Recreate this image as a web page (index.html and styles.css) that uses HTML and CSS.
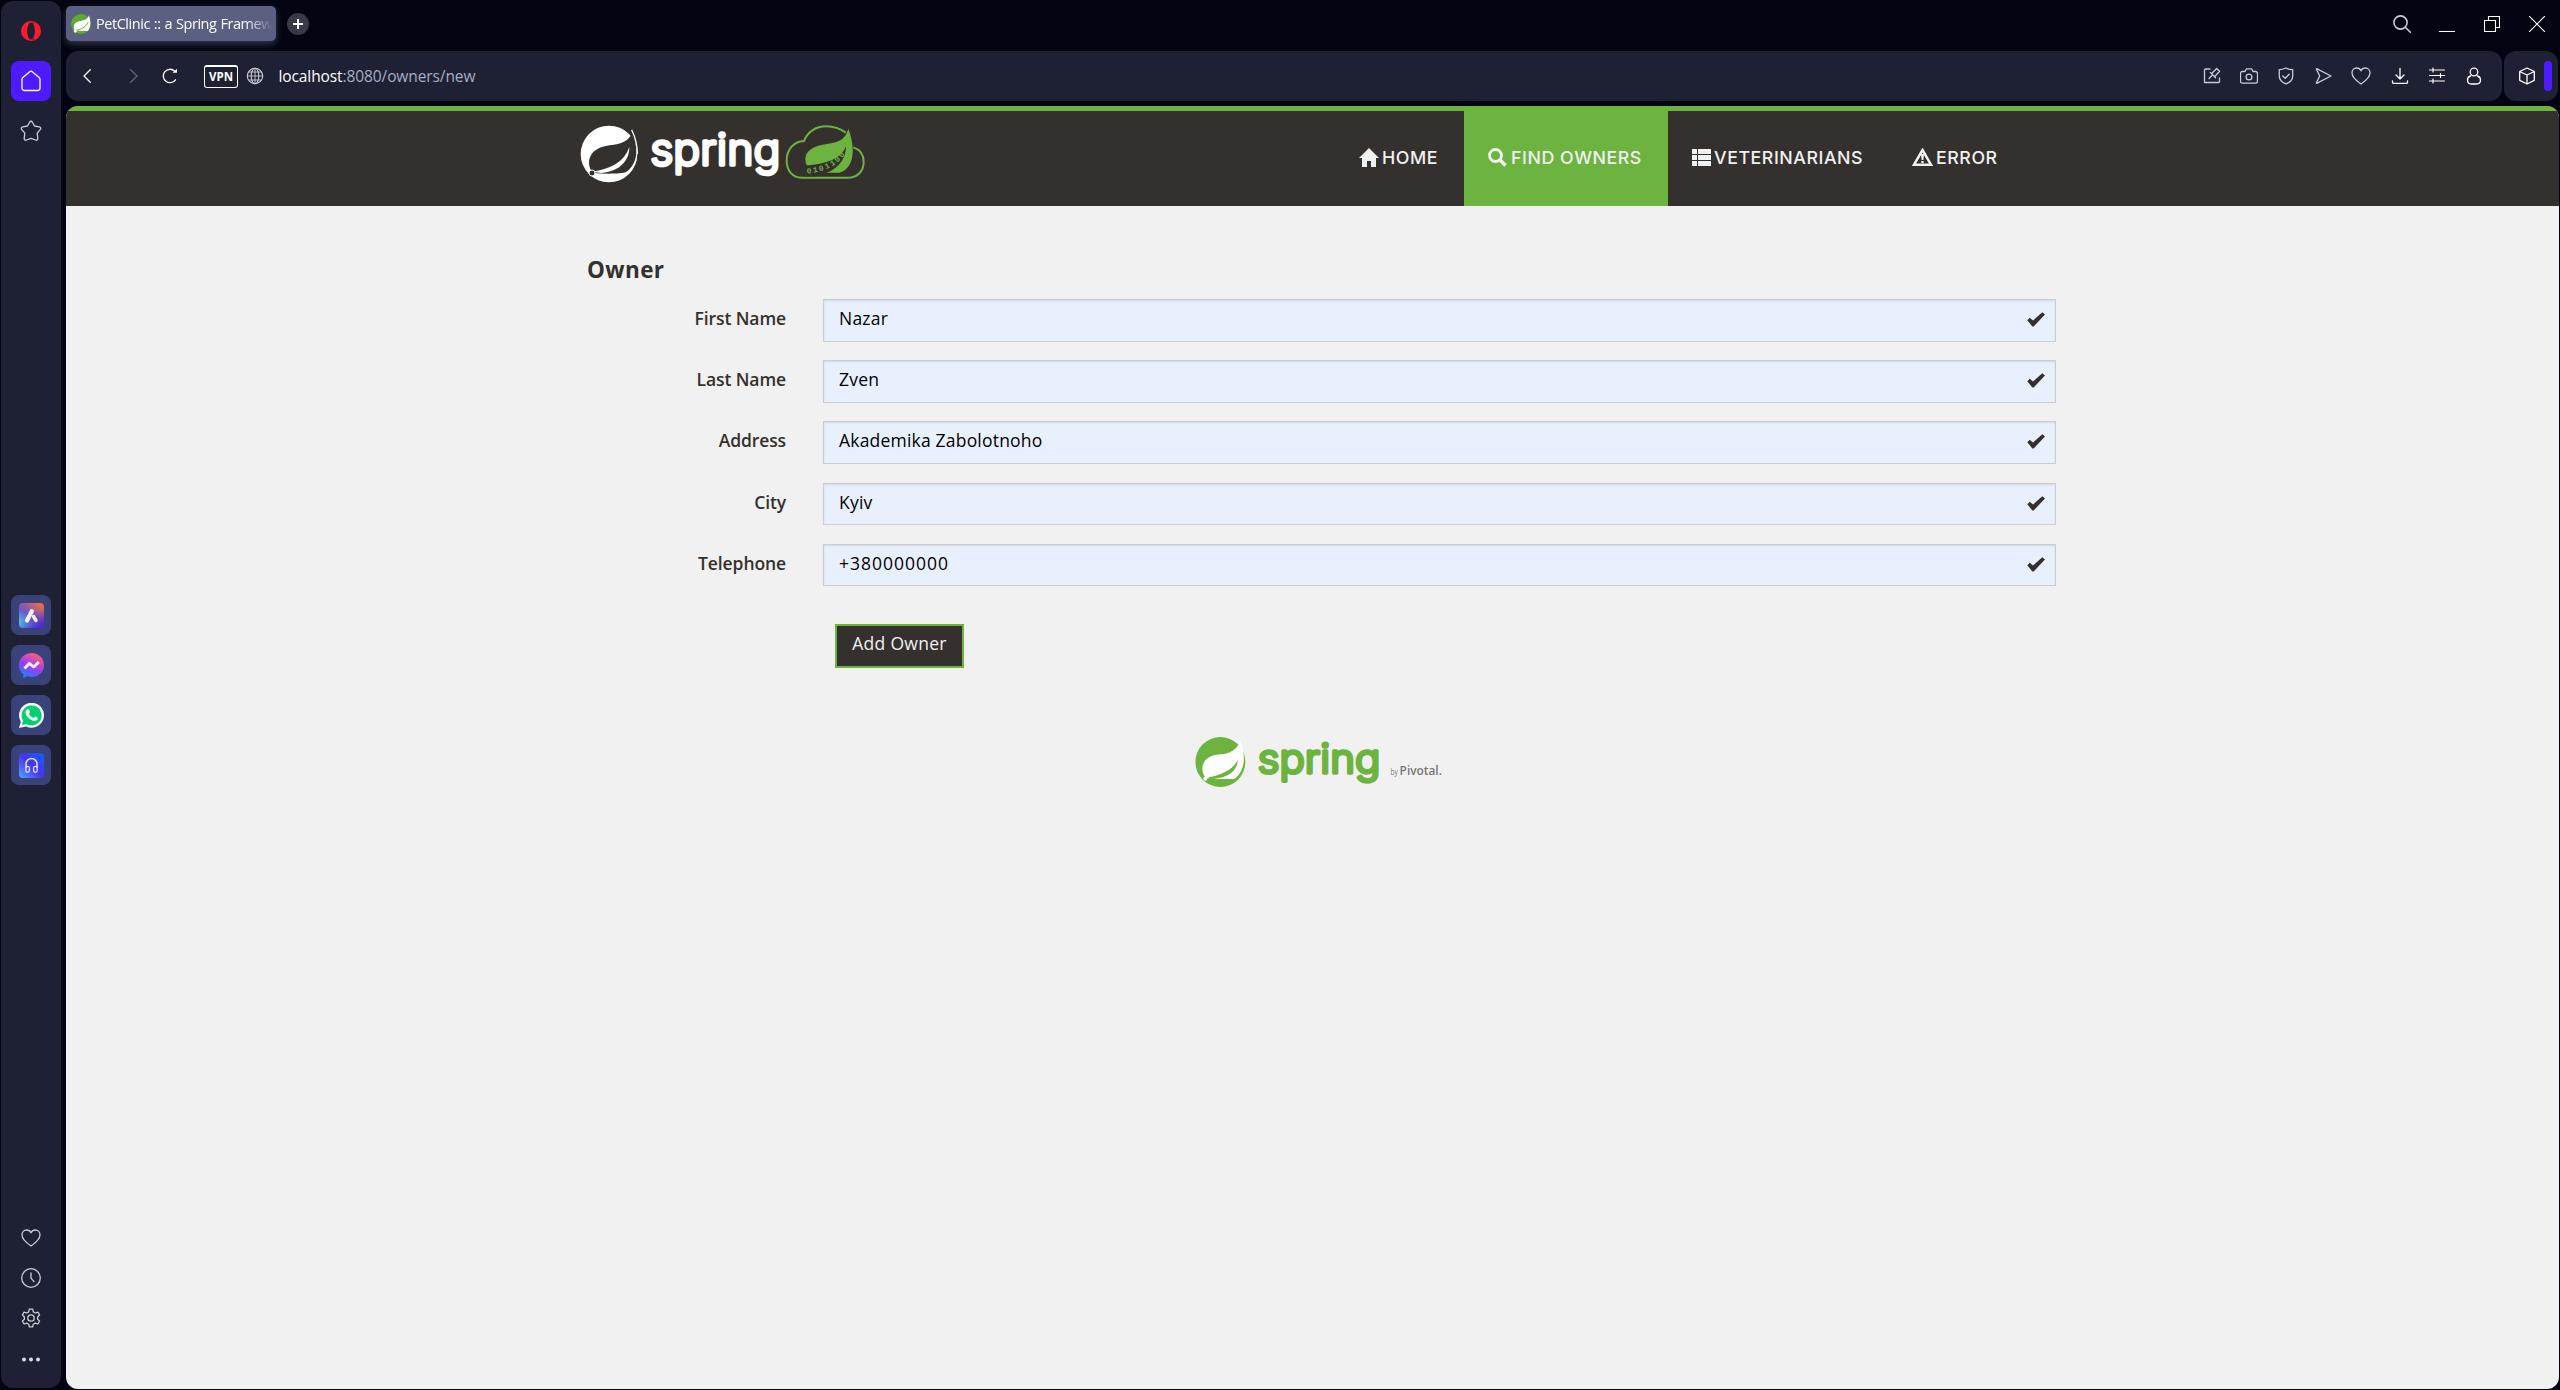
FILE: index.html
```html
<!DOCTYPE html>
<html lang="en">
<head>
<meta charset="utf-8">
<title>PetClinic :: a Spring Framework demonstration</title>
<link rel="stylesheet" href="styles.css">
</head>
<body>
<svg class="defs" width="0" height="0">
  <defs>
    <symbol id="check" viewBox="0 0 54 44"><path d="M1 24 8 17 18 25 46 0 54 7 20 43 16 43Z"/></symbol>
    <symbol id="heart" viewBox="0 0 20 18"><path d="M10 17C7 15 1 10.500 1 5.800 1 3 3 1 5.600 1 7.500 1 9.200 2 10 3.800 10.800 2 12.500 1 14.400 1 17 1 19 3 19 5.800 19 10.500 13 15 10 17Z"/></symbol>
  </defs>
</svg>
<aside class="sidebar">
  <div class="side-group side-top">
    <svg class="opera" width="20" height="20" viewBox="0 0 20 20"><path fill="#ff1b2d" fill-rule="evenodd" d="M10 0a10 10 0 1 0 0 20 10 10 0 0 0 0-20Zm0 1.600c2.400 0 3.800 3.700 3.800 8.400s-1.400 8.400-3.800 8.400S6.200 14.700 6.200 10 7.600 1.600 10 1.600Z"/><path fill="#c80d1e" d="M10 1.600C12 .3 14.500.800 16 2.100c-1.500-.5-3 0-3.600 1.300C11.800 2.200 11 1.600 10 1.600ZM10 18.400c2 1.300 4.500.8 6-.5-1.500.5-3 0-3.600-1.300-.6 1.200-1.400 1.800-2.400 1.800Z"/></svg>
    <div class="tile home"><svg class="line bright" width="20" height="22" viewBox="0 0 20 22"><path d="M1 9.500C1 8.800 1.300 8 1.900 7.500L8.700 1.700a2 2 0 0 1 2.600 0L18.100 7.500C18.700 8 19 8.800 19 9.500V18a2.500 2.500 0 0 1-2.500 2.500h-13A2.500 2.500 0 0 1 1 18Z"/></svg></div>
    <svg class="line star" width="22" height="22" viewBox="0 0 22 22"><path d="M9.600 2.200c.6-1.300 2.200-1.300 2.800 0L14.500 6l4.700.9c1.600.3 2 1.600 1 2.700l-3 3.500.6 5.300c.2 1.500-1 2.200-2.200 1.600L11 18.300 6.400 20c-1.200.6-2.400-.1-2.200-1.600l.6-5.300-3-3.500C.8 8.500 1.200 7.200 2.800 6.900L7.500 6Z"/></svg>
  </div>
  <div class="side-group side-apps">
    <div class="tile app"><svg width="25" height="25" viewBox="0 0 25 25"><defs><linearGradient id="ga" x1=".1" y1=".9" x2=".8" y2="0"><stop offset="0" stop-color="#4ccce0"/><stop offset=".45" stop-color="#6b55c8"/><stop offset="1" stop-color="#ee6b45"/></linearGradient><linearGradient id="gb" x1=".3" y1=".1" x2=".8" y2="1"><stop offset=".4" stop-color="#5b34d0" stop-opacity="0"/><stop offset="1" stop-color="#4c25d8"/></linearGradient></defs><rect width="25" height="25" rx="4" fill="url(#ga)"/><rect width="25" height="25" rx="4" fill="url(#gb)"/><path d="M8 17.500 12.800 8.200" stroke="#f2f2f2" stroke-width="4.200" stroke-linecap="round"/><path d="m14.500 13.500 2.500 4" stroke="#f2f2f2" stroke-width="3.500" stroke-linecap="round"/></svg></div>
    <div class="tile app"><svg width="25" height="25" viewBox="0 0 25 25"><defs><linearGradient id="gm" x1=".2" y1="1" x2=".7" y2="0"><stop offset="0" stop-color="#0a8cff"/><stop offset=".45" stop-color="#9a3cff"/><stop offset="1" stop-color="#ff5f70"/></linearGradient></defs><path fill="url(#gm)" d="M12.500 0C5.500 0 0 5 0 12c0 4 1.700 7 4.300 9.200V25l4-1.800C17 26 25 20.500 25 12.300 25 5 19.500 0 12.500 0Z"/><path d="m5.500 15.500 4.700-5 4.600 3.400 5-5" fill="none" stroke="#f4f4f4" stroke-width="2.800" stroke-linejoin="round"/></svg></div>
    <div class="tile app"><svg width="25" height="25" viewBox="0 0 25 25"><path fill="#f5f5f5" d="M0 25 1.800 18.700A12.500 12.500 0 1 1 7 23.500Z"/><path fill="#04d072" d="m3 22 1-4.500A10 10 0 1 1 7.500 21Z"/><path fill="#f5f5f5" d="M8.300 6.200c.7-.3 1.500-.2 1.800.6l.8 2c.2.500-.7 1.400-.8 1.900.8 2 2.500 3.400 4.400 4.200.6-.2 1.200-1.500 1.800-1.500l2.200 1.200c.6.400.2 1.700-.4 2.300-1.200 1.200-3 1.300-4.800.6C9.500 16 7.300 13 6.600 10.600 6.200 8.900 7 6.800 8.300 6.200Z"/></svg></div>
    <div class="tile app"><svg width="25" height="25" viewBox="0 0 25 25"><defs><linearGradient id="gh" x1="0" y1="1" x2="1" y2="0"><stop offset="0" stop-color="#4fa8ff"/><stop offset=".5" stop-color="#4a32f0"/><stop offset="1" stop-color="#0d63ff"/></linearGradient></defs><rect width="25" height="25" rx="4" fill="url(#gh)"/><path d="M7 15v-4a5.500 5.500 0 0 1 11 0v4" fill="none" stroke="#dfe2ff" stroke-width="1.500"/><rect x="6.800" y="13.300" width="3.600" height="6" rx="1.800" fill="none" stroke="#dfe2ff" stroke-width="1.300"/><rect x="14.600" y="13.300" width="3.600" height="6" rx="1.800" fill="none" stroke="#dfe2ff" stroke-width="1.300"/></svg></div>
  </div>
  <div class="side-group side-bottom">
    <svg class="line" width="20" height="18"><use href="#heart"/></svg>
    <svg class="line" width="20" height="20" viewBox="0 0 20 20"><circle cx="10" cy="10" r="9.300"/><path d="M10 5v5.200l3 3.500"/></svg>
    <svg class="line" width="20" height="20" viewBox="0 0 20 20"><circle cx="10" cy="10" r="3.200"/><path d="M8.300 1.200h3.400l.6 2.700 2 1.100 2.600-.9 1.700 3-2 1.800v2.300l2 1.800-1.700 3-2.600-.9-2 1.100-.6 2.700H8.300l-.6-2.700-2-1.100-2.600.9-1.700-3 2-1.800V8.900l-2-1.800 1.700-3 2.600.9 2-1.100Z"/></svg>
    <svg width="20" height="20" viewBox="0 0 20 20" fill="#d9dbe2"><circle cx="3" cy="10.500" r="2"/><circle cx="10" cy="10.500" r="2"/><circle cx="17" cy="10.500" r="2"/></svg>
  </div>
</aside>
<div class="browser">
  <header class="tabs">
    <div class="tab">
      <svg width="20" height="20" viewBox="0 0 150 150"><circle cx="75" cy="75" r="75" fill="#5fa832"/><path fill="#fff" d="M135 10C124 38 105 48 72 52 38 57 22 72 22 98c0 12 4 20 9 26 45 5 80 3 96 3C147 98 151 60 135 10Z"/><path d="M32 124C80 115 115 95 129 60" stroke="#5fa832" stroke-width="7" fill="none"/><circle cx="32" cy="128" r="12" fill="#fff"/></svg>
      <span class="tab-title">PetClinic :: a Spring Framew</span>
    </div>
    <div class="new-tab"><svg width="10" height="10" viewBox="0 0 10 10"><path d="M5 0v10M0 5h10" stroke="#fff" stroke-width="2"/></svg></div>
    <div class="window-tools">
      <svg class="line" width="18" height="18" viewBox="0 0 18 18"><circle cx="7.500" cy="7.500" r="6.600"/><path d="m12.300 12.300 5 5"/></svg>
      <svg class="win" width="16" height="16" viewBox="0 0 16 16"><path d="M0 15.500h16"/></svg>
      <svg class="win" width="16" height="16" viewBox="0 0 16 16"><path d="M.5 4.500h11v11H.5ZM4.500 4.500v-4h11v11h-4"/></svg>
      <svg class="win" width="16" height="16" viewBox="0 0 16 16"><path d="m0 0 16 16M16 0 0 16"/></svg>
    </div>
  </header>
  <div class="toolbar-row">
    <div class="toolbar">
      <svg class="line bright back" width="8" height="14" viewBox="0 0 8 14"><path d="M7.300.8 1 7l6.300 6.200"/></svg>
      <svg class="line dim forward" width="8" height="14" viewBox="0 0 8 14"><path d="M.7.800 7 7 .7 13.200"/></svg>
      <svg class="line bright reload" width="16" height="16" viewBox="0 0 16 16"><path d="M13.500 11.800A6.700 6.700 0 1 1 12.500 3"/><path d="M10.500 4.700H15V.8Z" fill="#fff" stroke="none"/></svg>
      <span class="vpn">VPN</span>
      <svg class="line globe" width="18" height="18" viewBox="0 0 18 18"><circle cx="9" cy="9" r="7.700"/><ellipse cx="9" cy="9" rx="3.800" ry="7.700"/><path d="M9 1.300v15.400M1.300 9h15.400M2.500 5h13M2.500 13h13" stroke-width=".9"/></svg>
      <span class="url"><b>localhost</b>:8080/owners/new</span>
      <div class="tools">
        <svg class="line" width="18" height="18" viewBox="0 0 18 18"><path d="M7 2H2.500C1.900 2 1.500 2.400 1.500 3v12.500h14c.6 0 1-.4 1-1V11M6 11.500l3-3M9 6.200 13.600 1.500l3 2.800-4.600 5M7.300 5.400l5.300 5.300"/></svg>
        <svg class="line" width="18" height="18" viewBox="0 0 18 18"><path d="M5 4.500 6.500 1.800h5L13 4.500h2.500c1.200 0 2 .9 2 2v7.700c0 1.200-.8 2-2 2h-13c-1.200 0-2-.8-2-2V6.500c0-1.100.8-2 2-2Z"/><circle cx="9" cy="10" r="2.900"/></svg>
        <svg class="line" width="18" height="18" viewBox="0 0 18 18"><path d="M9 1c2 1 4 1.700 6.700 1.700V9c0 4-3.200 6.500-6.700 7.900C5.500 15.500 2.300 13 2.300 9V2.700C5 2.700 7 2 9 1ZM5.800 9 8.200 11.300l4-4"/></svg>
        <svg class="line" width="18" height="18" viewBox="0 0 18 18"><path d="M2.700 1.700 17 9 2.700 16.300 2.300 16 5.700 9 2.300 2Z"/></svg>
        <svg class="line" width="20" height="18"><use href="#heart"/></svg>
        <svg class="line bright" width="18" height="18" viewBox="0 0 18 18"><path d="M9 1.500v10M5 8l4 4 4-4M1.500 14v1.300c0 .6.400 1 1 1h13c.6 0 1-.4 1-1V14"/></svg>
        <svg class="line bright" width="18" height="18" viewBox="0 0 18 18"><path d="M1.500 3h15M1.500 8.500h15M1.500 14h15M5 1v4M12.500 6.500v4M5 12v4" stroke-width="1.200"/></svg>
        <svg class="line bright" width="18" height="18" viewBox="0 0 18 18"><circle cx="9" cy="5" r="3.800"/><path d="M5.600 9C3.500 9.500 2.500 11 2.500 13c0 2.500 1.500 4 4 4h5c2.500 0 4-1.500 4-4 0-2-1-3.500-3.100-4"/></svg>
      </div>
    </div>
    <div class="cube-box">
      <svg class="line bright" width="18" height="18" viewBox="0 0 18 18"><path d="m9 1 7.300 3.500v8.800L9 17l-7.300-3.700V4.500ZM1.700 4.500 9 8l7.300-3.500M9 8v9"/></svg>
      <i class="accent"></i>
    </div>
  </div>
  <main class="page">
    <nav class="navbar">
      <svg class="brand" viewBox="55 70 870 186" width="290" height="62">
        <circle cx="148" cy="163" r="85" fill="#fff"/>
        <path fill="#34302d" d="M216 102C206 124 186 133 150 137 106 142 88 165 88 190c0 12 5 24 14 30 40 4 85 2 96-2C226 200 232 168 230 145 226 120 222 112 216 102Z"/>
        <path d="M216 90C228 115 233 138 233 163" stroke="#fff" stroke-width="4" fill="none"/>
        <path fill="#fff" d="M96 216C155 208 195 185 209 142 210 180 183 215 125 220Z"/>
        <circle cx="97" cy="220" r="9" fill="#34302d" stroke="#fff" stroke-width="3"/>
        <text x="272" y="196" textLength="390" lengthAdjust="spacingAndGlyphs" class="word" fill="#fff" stroke="#fff">spring</text>
        <path d="M858 99C842 87 825 80 800 80c-32 0-57 17-67 44-33 2-52 27-52 58 0 33 18 52 46 52h138c29 0 47-20 47-47 0-22-12-38-31-44" fill="none" stroke="#6db33f" stroke-width="6"/>
        <path fill="#6db33f" d="M866 87C857 116 844 127 805 132c-45 6-68 22-68 46 0 10 3 18 8 24l35 17H840C878 207 892 158 866 87Z"/>
        <path d="M859 140C846 174 806 194 736 198V230H772C826 216 858 188 859 140Z" fill="#34302d"/>
        <path id="bits" d="M742 222C794 217 838 198 862 154" fill="none"/>
        <text class="bits"><textPath href="#bits" textLength="132">0101100</textPath></text>
      </svg>
      <ul class="menu">
        <li><svg width="20" height="19" viewBox="0 0 20 19"><path fill="#f1f1f1" d="M10 0 20 10h-3v9h-5v-6H8v6H3v-9H0Z"/></svg><span>HOME</span></li>
        <li class="active"><svg width="19" height="19" viewBox="0 0 19 19"><circle cx="7.500" cy="7.500" r="6" fill="none" stroke="#f1f1f1" stroke-width="2.800"/><path d="m12 12 5.500 5.500" stroke="#f1f1f1" stroke-width="3.500"/></svg><span>FIND OWNERS</span></li>
        <li><svg width="19" height="17" viewBox="0 0 19 17" fill="#f1f1f1"><path d="M0 0h5v5H0ZM6 0h13v5H6ZM0 6h5v5H0ZM6 6h13v5H6ZM0 12h5v5H0ZM6 12h13v5H6Z"/></svg><span>VETERINARIANS</span></li>
        <li><svg width="21" height="18" viewBox="0 0 21 18"><path fill="none" stroke="#f1f1f1" stroke-width="2.500" d="M10.500 2 19 16.700H2Z"/><path d="M9 6h3l-.6 6H9.600ZM9.300 13h2.400v2H9.300Z" fill="#f1f1f1"/></svg><span>ERROR</span></li>
      </ul>
    </nav>
    <section class="content">
      <h2>Owner</h2>
      <form class="owner-form">
        <div class="row"><label>First Name</label><div class="field"><span>Nazar</span><svg><use href="#check"/></svg></div></div>
        <div class="row"><label>Last Name</label><div class="field"><span>Zven</span><svg><use href="#check"/></svg></div></div>
        <div class="row"><label>Address</label><div class="field"><span>Akademika Zabolotnoho</span><svg><use href="#check"/></svg></div></div>
        <div class="row"><label>City</label><div class="field"><span>Kyiv</span><svg><use href="#check"/></svg></div></div>
        <div class="row"><label>Telephone</label><div class="field"><span class="digits">+380000000</span><svg><use href="#check"/></svg></div></div>
        <button type="button">Add Owner</button>
      </form>
      <svg class="pivotal" viewBox="100 45 760 160" width="253.300" height="53.300">
        <circle cx="182" cy="126" r="75" fill="#6db33f"/>
        <path fill="#fff" d="M242 63C231 88 215 101 180 103c-35 3-52 20-52 44 0 12 4 20 12 27 30 5 60 3 84 3 30-22 37-64 18-114Z"/>
        <path fill="#6db33f" d="M146 172C185 165 220 150 234 120 233 155 200 177 150 177Z"/>
        <circle cx="137" cy="176" r="6" fill="#fff"/>
        <text x="294" y="160" textLength="368" lengthAdjust="spacingAndGlyphs" class="word small" fill="#6db33f" stroke="#6db33f">spring</text>
        <text x="693" y="165" class="by" textLength="22" lengthAdjust="spacingAndGlyphs">by</text>
        <text x="720" y="165" class="piv" textLength="127" lengthAdjust="spacingAndGlyphs">Pivotal.</text>
      </svg>
    </section>
  </main>
</div>
</body>
</html>
```

FILE: styles.css
```css
* { box-sizing: border-box; }
body {
  margin: 0;
  width: 2560px;
  height: 1390px;
  overflow: hidden;
  background: #020411;
  display: flex;
  padding: 1px 1px 1px;
  font-family: "Open Sans", "Noto Sans", sans-serif;
}
.defs { position: absolute; }
svg { flex: none; display: block; }
.line { fill: none; stroke: #c9ccd5; stroke-width: 1.3; stroke-linejoin: round; stroke-linecap: round; }
.line.bright { stroke: #fff; }
.line.dim { stroke: #62657a; }

.sidebar {
  width: 60px;
  height: 1387px;
  margin-right: 5px;
  border-radius: 12px;
  background: #1e2134;
  display: flex;
  flex-direction: column;
  align-items: center;
}
.side-group { display: flex; flex-direction: column; align-items: center; }
.side-top { padding-top: 20px; height: 594px; }
.home { margin: 20px 0 19px; background: #4c1cff; }
.tile { width: 40px; height: 40px; border-radius: 8px; display: flex; align-items: center; justify-content: center; }
.app { background: #3a4379; }
.side-apps { gap: 10px; flex: 1; }
.side-bottom { gap: 20.500px; padding-bottom: 19.500px; }

.browser { width: 2493px; display: flex; flex-direction: column; }
.tabs { height: 50px; display: flex; }
.tab {
  width: 210px;
  height: 35px;
  margin-top: 5px;
  padding: 0 5px;
  border-radius: 5px;
  background: #5b6083;
  box-shadow: 0 3px 7px rgba(130, 135, 170, .4);
  display: flex;
  align-items: center;
  gap: 5px;
}
.tab-title {
  flex: 1;
  white-space: nowrap;
  color: #fff;
  font-size: 14.500px;
  letter-spacing: -.75px;
  word-spacing: .6px;
  line-height: 30px;
  -webkit-mask-image: linear-gradient(90deg, #000 85%, transparent);
  mask-image: linear-gradient(90deg, #000 85%, transparent);
}
.tab-title { letter-spacing: -.45px; }
.new-tab {
  width: 22px; height: 22px; margin: 12px 0 0 11px; border-radius: 50%; background: #373946;
  display: flex; align-items: center; justify-content: center;
}
.window-tools { margin-left: auto; padding: 15px 14px 0 0; display: flex; gap: 29px; }
.window-tools .line { margin-right: -1px; stroke-width: 1.600; margin-top: -1px; }
.win { fill: none; stroke: #fff; stroke-width: 1.100; }

.toolbar-row { display: flex; gap: 2px; height: 50px; }
.toolbar {
  width: 2436px;
  border-radius: 12px;
  background: #1e2134;
  display: flex;
  align-items: center;
}
.back { margin-left: 16.500px; }
.forward { margin-left: 39px; }
.reload { margin-left: 24.500px; }
.vpn {
  margin-left: 26px;
  width: 34px;
  height: 23px;
  border: 1.5px solid #fff;
  border-top-width: 2px;
  border-radius: 3px;
  color: #fff;
  font-size: 11.500px;
  font-weight: 700;
  line-height: 20px;
  text-align: center;
}
.globe { margin-left: 8px; stroke-width: 1.100; }
.url { margin-left: 14.500px; color: #a5adc0; font-size: 15.500px; letter-spacing: -.1px; }
.url b { color: #fff; font-weight: 400; }
.tools { margin-left: auto; margin-right: 19px; display: flex; gap: 19.200px; }
.cube-box {
  width: 54px; border-radius: 12px; background: #1e2134;
  display: flex; align-items: center; padding-left: 14px; gap: 8px;
}
.accent { width: 8px; height: 30px; border-radius: 4px; background: #4c1cff; }

.page {
  margin-top: 5px;
  height: 1283px;
  border-radius: 12px;
  overflow: hidden;
  background: #f1f1f1;
  display: flex;
  flex-direction: column;
}
.navbar {
  height: 100px;
  border-top: 5px solid #6db33f;
  background: #34302d;
  display: flex;
}
.brand { margin: 12px 0 0 512px; }
.word { font-family: Inter, "Open Sans", sans-serif; font-weight: 300; font-size: 132px; stroke-width: 10; stroke-linejoin: round; }
.word.small { font-size: 122px; }
.bits { font-family: "Liberation Mono", monospace; font-weight: 700; font-size: 24px; fill: #6db33f; }
.menu {
  margin: 0 0 0 467px;
  padding: 0;
  list-style: none;
  display: grid;
  grid-template-columns: 129px 204px 220px 136px;
}
.menu li {
  padding: 0 0 2px 24px;
  display: flex;
  align-items: center;
  gap: 3px;
  color: #f1f1f1;
  font-family: Inter, sans-serif;
  font-weight: 500;
  font-size: 17.800px;
  letter-spacing: .55px;
  white-space: nowrap;
}
.menu li svg { position: relative; top: -.5px; }
.menu .active { background: #6db33f; gap: 4px; }

.content { width: 1469px; margin-left: 521px; color: #34302d; }
h2 { margin: 47px 0 0; height: 46px; font-size: 22.500px; line-height: 33px; font-weight: 700; letter-spacing: .4px; }
.owner-form { display: flex; flex-direction: column; align-items: flex-start; }
.row { width: 100%; height: 42.500px; margin-bottom: 18.700px; display: flex; }
label { width: 199px; margin-right: 37px; text-align: right; font-size: 17.500px; font-weight: 600; letter-spacing: -.1px; line-height: 38px; }
.field {
  width: 1233px;
  height: 42.500px;
  padding: 0 10px 0 15px;
  border: 1px solid #ccc;
  background: #e8f0fe;
  box-shadow: inset 0 1px 2px rgba(0, 0, 0, .1);
  color: #000;
  font-size: 17.500px;
  letter-spacing: .2px;
  line-height: 36.500px;
  display: flex;
  justify-content: space-between;
}
.field .digits { letter-spacing: 1px; }
.field svg { width: 18px; height: 15px; margin-top: 12px; fill: #34302d; }
button {
  width: 129px;
  height: 44px;
  margin: 19px 0 0 248px;
  padding: 0 0 5px;
  border: 2px solid #6db33f;
  background: #34302d;
  color: #f1f1f1;
  font: 17.500px "Open Sans", sans-serif;
  letter-spacing: .3px;
}
.pivotal { margin: 67px 0 0 606px; }
.by, .piv { font-family: "Open Sans", sans-serif; fill: #777; }
.by { font-size: 25px; }
.piv { font-size: 37px; font-weight: 600; }
```
